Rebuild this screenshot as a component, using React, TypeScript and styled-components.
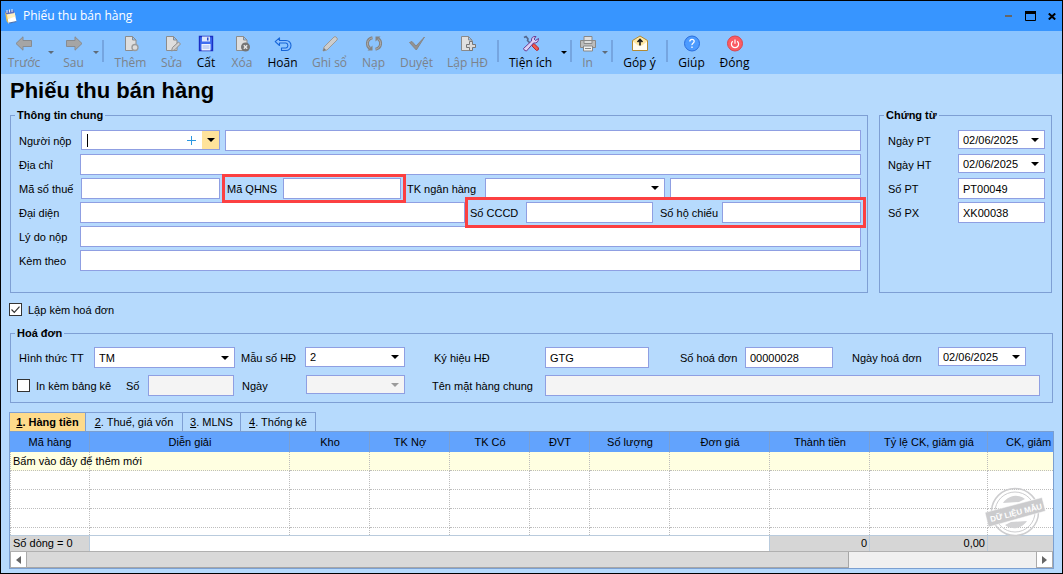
import React from "react";
import styled, { createGlobalStyle, css } from "styled-components";

const color = {
  title: "#3795ff",
  toolbar: "#8bc4ff",
  body: "#b6dafd",
  group: "#7e9fd4",
  field: "#8f9fe2",
  header: "#62a3fd",
  dotted: "#bdbdbd",
  mark: "#fc4041",
};

const GlobalStyle = createGlobalStyle`
  *, *::before, *::after { box-sizing: border-box; }
  body { margin: 0; background: ${color.body}; }
  body, button, input, select, table {
    font-family: "Liberation Sans", Arial, sans-serif;
    font-size: 11px;
    line-height: 14px;
    color: #000;
  }
  button { cursor: pointer; }
`;

const Window = styled.div`
  display: flex;
  flex-direction: column;
  min-height: 100vh;
  border: 1px solid #000;
  background: ${color.body};
`;

const TitleBar = styled.header`
  display: flex;
  align-items: center;
  gap: 6px;
  height: 30px;
  padding: 0 0 0 3px;
  background: ${color.title};
`;

const WindowTitle = styled.span`
  flex: 1;
  font-family: "Open Sans", "Noto Sans", sans-serif;
  font-size: 12px;
  line-height: 16px;
  color: #fff;
`;

const WindowButtons = styled.div`
  display: flex;
  gap: 2px;
`;

const WindowButton = styled.button`
  display: grid;
  place-items: center;
  width: 20px;
  height: 20px;
  padding: 0;
  border: 0;
  background: none;
`;

const Toolbar = styled.div`
  display: flex;
  height: 43px;
  background: ${color.toolbar};
`;

const ToolButton = styled.button<{ $w: number }>`
  display: flex;
  flex: none;
  flex-direction: column;
  align-items: center;
  gap: 3px;
  width: ${(p) => p.$w}px;
  padding: 4px 0 0;
  border: 0;
  background: none;
  font-family: "Open Sans", "Noto Sans", sans-serif;
  font-size: 12px;
  line-height: 16px;
  white-space: nowrap;
  color: #000;
  &:disabled { color: #7c828a; }
`;

const ToolArrow = styled.button`
  display: flex;
  flex: none;
  align-items: center;
  justify-content: center;
  width: 8px;
  padding: 0;
  border: 0;
  background: none;
  color: #000;
  &:disabled { color: #5f6b78; }
`;

const ToolDivider = styled.span`
  flex: none;
  width: 2px;
  height: 22px;
  margin: 9px 2px 0;
  background: #75a5e0;
`;

const Content = styled.main`
  padding: 0 8px 4px;
`;

const Heading = styled.h1`
  margin: 0;
  padding-left: 1px;
  font-size: 22px;
  line-height: 34px;
  font-weight: bold;
`;

const TopRow = styled.div`
  display: grid;
  grid-template-columns: 1fr 173px;
  gap: 11px;
  padding: 0 2px 0 1px;
`;

const Group = styled.fieldset<{ $gap: number }>`
  min-width: 0;
  margin: 0;
  padding: 7px 6px 6px 8px;
  border: 1px solid ${color.group};
  display: flex;
  flex-direction: column;
  gap: ${(p) => p.$gap}px;
`;

const InfoGroup = styled(Group)`
  padding-top: 8px;
  padding-bottom: 21px;
`;

const Legend = styled.legend`
  margin-left: -4px;
  padding: 0 2px;
  font-weight: bold;
  line-height: 14px;
`;

const Row = styled.div`
  display: flex;
  height: 21px;
`;

const Label = styled.label<{ $w: number; $lead?: number }>`
  flex: none;
  width: ${(p) => p.$w}px;
  padding-left: ${(p) => p.$lead ?? 0}px;
  line-height: 22px;
  white-space: nowrap;
`;

const fieldBox = css`
  border: 1px solid ${color.field};
  border-radius: 0;
  background: #fff;
`;

const sized = css<{ $w?: number }>`
  ${(p) => (p.$w ? `flex: none; width: ${p.$w}px;` : "flex: 1; min-width: 0;")}
`;

const Field = styled.input<{ $w?: number }>`
  ${fieldBox}
  ${sized}
  height: 21px;
  padding: 1px 4px 0;
  outline: none;
  &:disabled { background: #f4f4f4; }
`;

const Gap = styled.span<{ $w: number }>`
  flex: none;
  width: ${(p) => p.$w}px;
`;

const SelectBox = styled.div<{ $w?: number; $h?: number; $off?: boolean }>`
  ${fieldBox}
  ${sized}
  position: relative;
  height: ${(p) => p.$h ?? 20}px;
  color: ${(p) => (p.$off ? "#9b9b9b" : "#000")};
  background: ${(p) => (p.$off ? "#f4f4f4" : "#fff")};
  svg {
    position: absolute;
    right: 5px;
    top: calc(50% - 2px);
    pointer-events: none;
  }
`;

const NativeSelect = styled.select`
  appearance: none;
  display: block;
  width: 100%;
  height: 100%;
  padding: 0 18px 0 4px;
  border: 0;
  border-radius: 0;
  outline: none;
  background: none;
`;

const Combo = styled.div`
  ${fieldBox}
  display: flex;
  flex: none;
  width: 139px;
  height: 20px;
`;

const ComboInput = styled.input`
  flex: 1;
  min-width: 0;
  padding: 0 2px;
  border: 0;
  outline: none;
  background: none;
`;

const Caret = styled.span`
  width: 1px;
  height: 13px;
  margin: 3px 0 0 5px;
  background: #000;
`;

const ComboButton = styled.button<{ $accent?: boolean }>`
  display: grid;
  place-items: center;
  width: ${(p) => (p.$accent ? 17 : 22)}px;
  padding: 0;
  border: 0;
  background: ${(p) => (p.$accent ? "#ffe39b" : "none")};
`;

const Marked = styled.div<{ $area: string }>`
  position: relative;
  display: flex;
  flex: none;
  &::after {
    content: "";
    position: absolute;
    z-index: 1;
    inset: ${(p) => p.$area};
    border: 3px solid ${color.mark};
    pointer-events: none;
  }
`;

const CheckRow = styled.div`
  display: flex;
  align-items: center;
  height: 33px;
`;

const CheckBox = styled.input`
  appearance: none;
  flex: none;
  width: 13px;
  height: 13px;
  margin: 0 6px 0 0;
  border: 1px solid #333;
  background: #fff;
  &:checked {
    background: #fff
      url("data:image/svg+xml,%3Csvg xmlns='http://www.w3.org/2000/svg' viewBox='0 0 11 11'%3E%3Cpath d='M1.5 5.5l2.8 2.8L9.5 2.6' fill='none' stroke='%23333' stroke-width='1.2'/%3E%3C/svg%3E");
  }
`;

const CheckLabel = styled.label<{ $w?: number }>`
  display: flex;
  align-items: center;
  flex: none;
  width: ${(p) => (p.$w ? `${p.$w}px` : "auto")};
  white-space: nowrap;
`;

const InsetCheckLabel = styled(CheckLabel)`
  margin-left: -2px;
`;

const InvoiceArea = styled.div`
  padding: 0 1px;
`;

const Tabs = styled.div`
  display: flex;
  margin-top: 9px;
`;

const Tab = styled.button<{ $w: number; $active?: boolean }>`
  width: ${(p) => p.$w}px;
  height: 19px;
  padding: 0;
  border: 1px solid ${color.group};
  border-bottom: 0;
  border-left-width: ${(p) => (p.$active ? 1 : 0)}px;
  background: ${(p) => (p.$active ? "#fedb8b" : "none")};
  font-weight: ${(p) => (p.$active ? "bold" : "normal")};
  white-space: nowrap;
`;

const GridFrame = styled.div`
  position: relative;
  border: 1px solid #7b9fd0;
  background: #fff;
`;

const Table = styled.table`
  width: 100%;
  table-layout: fixed;
  border-collapse: separate;
  border-spacing: 0;
  th {
    height: 20px;
    padding: 0 0 0 1px;
    border-right: 1px solid #7ba0d2;
    background: ${color.header};
    font-weight: normal;
    white-space: nowrap;
    overflow: hidden;
  }
  th:last-child { padding-left: 18px; text-align: left; }
  th:last-child, td:last-child { border-right: 0; }
`;

const Col = styled.col<{ $w?: number }>`
  width: ${(p) => (p.$w ? `${p.$w}px` : "auto")};
`;

const BodyRow = styled.tr<{ $entry?: boolean; $cut?: boolean }>`
  td {
    height: ${(p) => (p.$cut ? 7 : 19)}px;
    padding: 0 0 0 2px;
    border-right: 1px dotted ${color.dotted};
    border-bottom: ${(p) => (p.$cut ? "0" : `1px dotted ${color.dotted}`)};
    background: ${(p) => (p.$entry ? "#ffffe1" : "#fff")};
    white-space: nowrap;
  }
  td:first-child { border-left: 1px dotted ${color.dotted}; }
  td > span { position: relative; }
`;

const TotalRow = styled.tr`
  td {
    height: 16px;
    padding: 0 2px;
    border-top: 1px solid #b9cbdd;
    border-right: 1px solid #b9cbdd;
    background: #d6d6d6;
    text-align: right;
    vertical-align: top;
    line-height: 15px;
    white-space: nowrap;
  }
  td:first-child { padding-left: 3px; text-align: left; }
  td:nth-child(2) { background: #fff; }
`;

const ScrollBar = styled.div`
  display: flex;
  height: 17px;
  border-top: 1px solid #b0b0b0;
  background: #f0f0f0;
`;

const ScrollButton = styled.button`
  display: grid;
  place-items: center;
  flex: none;
  width: 17px;
  padding: 0;
  border: 1px solid #ababab;
  border-top: 0;
  background: #fff;
`;

const Track = styled.div`
  display: flex;
  flex: 1;
  &::after {
    content: "";
    flex: 5;
  }
`;

const Thumb = styled.span`
  flex: 22;
  border-right: 1px solid #a6a6a6;
  border-bottom: 1px solid #a6a6a6;
  background: #d9d9d9;
`;

const Stamp = styled.svg`
  position: absolute;
  right: 5px;
  bottom: 31px;
  pointer-events: none;
`;

const Arrow = ({ w = 8 }: { w?: number }) => (
  <svg width={w} height={w / 2} viewBox="0 0 8 4" aria-hidden="true">
    <path d="M0 0h8L4 4z" fill="currentColor" />
  </svg>
);

const Icon = ({ children }: { children: React.ReactNode }) => (
  <svg width="18" height="17" viewBox="0 0 18 17" fill="none" aria-hidden="true">
    {children}
  </svg>
);

const pageShape = (
  <path d="M3.5 1.5h7l3.5 3.5v10.5H3.5zM10.500 1.500v3.500H14" fill="#dedede" stroke="#8c8c8c" />
);

const icons = {
  back: (
    <Icon>
      <path d="M1 8.500L8 1.800v3.700h8.500v6H8v3.700z" fill="#a5a5a5" stroke="#878b90" strokeLinejoin="round" />
    </Icon>
  ),
  next: (
    <Icon>
      <path d="M17 8.500L10 1.800v3.700H1.500v6H10v3.700z" fill="#a5a5a5" stroke="#878b90" strokeLinejoin="round" />
    </Icon>
  ),
  add: (
    <Icon>
      {pageShape}
      <circle cx="13" cy="12.500" r="3" fill="#dcdcdc" stroke="#9c9c9c" strokeWidth="1.400" />
    </Icon>
  ),
  edit: (
    <Icon>
      {pageShape}
      <path d="M8.500 16l1-3.500 6-5.500 2 2-6 6z" fill="#cfcfcf" stroke="#8f8f8f" />
    </Icon>
  ),
  save: (
    <Icon>
      <path d="M2.500 1.500h13v14h-13z" fill="#3f6cf0" stroke="#1a2fc4" strokeWidth="1.400" />
      <path d="M5 1.500h8v5H5z" fill="#dce6fb" />
      <path d="M10 2.500h1.500v3H10z" fill="#2b49cf" />
      <path d="M4.500 9h9v6.500h-9z" fill="#eef3ff" />
      <path d="M5.500 11h7M5.500 13h7" stroke="#9bb2ee" />
    </Icon>
  ),
  remove: (
    <Icon>
      {pageShape}
      <circle cx="12.500" cy="12" r="4.500" fill="#757575" />
      <path d="M10.800 10.300l3.400 3.400M14.200 10.300l-3.400 3.400" stroke="#e8e8e8" strokeWidth="1.400" />
    </Icon>
  ),
  undo: (
    <Icon>
      <path d="M5.500 2.800L1.200 6.700l4.300 3.800V8H12a2.600 2.600 0 010 5H7.500v2.500H12a5 5 0 000-10H5.500z" fill="#8cc0ff" stroke="#1766d8" strokeWidth="1.100" strokeLinejoin="round" />
    </Icon>
  ),
  post: (
    <Icon>
      <path d="M2 16l1-4L13 2q1-.8 2 0l1 1q.8 1 0 2L6 15z" fill="#cdcdcd" stroke="#9a9a9a" />
      <path d="M2 16l1-3 2 2z" fill="#777" />
    </Icon>
  ),
  reload: (
    <Icon>
      <path d="M7.500 2.800C1.500 4 1 10.500 5 13.500M10.500 14.200C16.500 13 17 6.500 13 3.500" stroke="#848484" strokeWidth="3" />
      <path d="M7.500 2.800C1.500 4 1 10.500 5 13.500M10.500 14.200C16.500 13 17 6.500 13 3.500" stroke="#adadad" />
      <path d="M2.500 15.500h5v-5zM15.500 1.500h-5v5z" fill="#848484" />
    </Icon>
  ),
  approve: (
    <Icon>
      <path d="M1.500 7.500l2.500-1 4 4.500 8.500-9L8.300 15z" fill="#929292" stroke="#878787" strokeLinejoin="round" />
    </Icon>
  ),
  invoice: (
    <Icon>
      <path d="M2.500 1.500h7l3.500 3.500v10.500H2.500zM9.500 1.500v3.500H13" fill="#e0e0e0" stroke="#8a8a8a" />
      <path d="M10.500 6.500h3v3h3v3h-3v3h-3v-3h-3v-3h3z" fill="#dadada" stroke="#777" />
    </Icon>
  ),
  tools: (
    <Icon>
      <path d="M2 2.500l2-1 2 2.500-.5 1.500 3.500 3.500" stroke="#54688f" strokeWidth="1.600" />
      <path d="M10.500 9.500l1.500-1 4.500 4.500q.5 2.500-2 2.500L10 11z" fill="#ef5a4d" stroke="#b52632" />
      <path d="M14 1.500q-5-.5-4.500 4.500L1.500 13.500q.5 2.500 3 2.500L11.500 8q5 .5 5-4.500l-3 2-1.500-1.500z" fill="#ddd0f5" stroke="#6a3d93" strokeLinejoin="round" />
    </Icon>
  ),
  print: (
    <Icon>
      <path d="M5 1.500h8v4H5z" fill="#dedede" stroke="#888" />
      <path d="M1.500 5.500h15v7h-15z" fill="#bcbcbc" stroke="#888" />
      <path d="M5 5.500h8v3H5z" fill="#ddd" stroke="#888" />
      <path d="M4.500 11h9v5h-9z" fill="#f0f0f0" stroke="#888" />
      <path d="M6 13.500h6" stroke="#888" />
    </Icon>
  ),
  feedback: (
    <Icon>
      <path d="M1.500 5.500L9 1l7.500 4.500v10h-15z" fill="#ffe9a5" stroke="#b38a32" />
      <path d="M2 6.500l5 4h4l5-4v8.500H2z" fill="#fffdf3" />
      <path d="M9 10.500V4.500M6.500 7L9 4.500 11.500 7" stroke="#1a1a1a" strokeWidth="1.600" />
    </Icon>
  ),
  help: (
    <Icon>
      <circle cx="9" cy="8.500" r="7.500" fill="#4c9bff" stroke="#2c6fdc" />
      <path d="M6.800 6.500Q6.900 4.300 9 4.300t2.200 2Q11.200 7.400 10 8.200T9 10.200M9 11.500V13" stroke="#fff" strokeWidth="1.300" />
    </Icon>
  ),
  close: (
    <Icon>
      <circle cx="9" cy="8.500" r="7.500" fill="#fb5b62" stroke="#d9474e" />
      <path d="M6.800 6.200a3.600 3.600 0 104.400 0M9 4.500v4.200" stroke="#fff" strokeWidth="1.200" />
    </Icon>
  ),
};

const AppIcon = () => (
  <svg width="13" height="15" viewBox="0 0 13 15" fill="none" aria-hidden="true">
    <path d="M2.500 5l8-1.500 2 9-8 2z" fill="#fff" />
    <path d="M2 5l8.500-1.500 1 4-8.500 3z" fill="#fff0c0" />
    <path d="M1 2.500L9.500 1l1 3L2 5.500z" fill="#5b6fc0" />
    <path d="M1 3l1.500 9 2 2.500L3 6z" fill="#ecc04d" />
    <path d="M5 13.500l7.500-1.500v1L5 14.800z" fill="#4c72ad" />
    <path d="M3 1v3M5.500 .5v3M8 0v3" stroke="#e9edfa" />
  </svg>
);

type SelectProps = { id: string; value?: string; w?: number; h?: number; off?: boolean };

const Select = ({ id, value = "", w, h, off }: SelectProps) => (
  <SelectBox $w={w} $h={h} $off={off}>
    <NativeSelect id={id} disabled={off} defaultValue={value}>
      <option value={value}>{value}</option>
    </NativeSelect>
    <Arrow />
  </SelectBox>
);

type Tool = { name: string; icon: keyof typeof icons; w: number; off?: boolean };

const ToolItem = ({ name, icon, w, off }: Tool) => (
  <ToolButton type="button" $w={w} disabled={off}>
    {icons[icon]}
    {name}
  </ToolButton>
);

const editTools: Tool[] = [
  { name: "Thêm", icon: "add", w: 49, off: true },
  { name: "Sửa", icon: "edit", w: 33, off: true },
  { name: "Cất", icon: "save", w: 36 },
  { name: "Xóa", icon: "remove", w: 36, off: true },
  { name: "Hoãn", icon: "undo", w: 45 },
  { name: "Ghi sổ", icon: "post", w: 49, off: true },
  { name: "Nạp", icon: "reload", w: 39, off: true },
  { name: "Duyệt", icon: "approve", w: 47, off: true },
  { name: "Lập HĐ", icon: "invoice", w: 55, off: true },
];

const columns: { name: string; w?: number }[] = [
  { name: "Mã hàng", w: 80 },
  { name: "Diễn giải", w: 200 },
  { name: "Kho", w: 80 },
  { name: "TK Nợ", w: 80 },
  { name: "TK Có", w: 80 },
  { name: "ĐVT", w: 60 },
  { name: "Số lượng", w: 80 },
  { name: "Đơn giá", w: 100 },
  { name: "Thành tiền", w: 100 },
  { name: "Tỷ lệ CK, giảm giá", w: 118 },
  { name: "CK, giảm" },
];

const cells = (first?: string) =>
  columns.map((c, i) => <td key={c.name}>{i === 0 && first ? <span>{first}</span> : null}</td>);

export default function App() {
  return (
    <>
      <GlobalStyle />
      <Window>
        <TitleBar>
          <AppIcon />
          <WindowTitle>Phiếu thu bán hàng</WindowTitle>
          <WindowButtons>
            <WindowButton type="button" aria-label="Thu nhỏ">
              <svg width="7" height="2"><path d="M0 0h7v2H0z" fill="#666" /></svg>
            </WindowButton>
            <WindowButton type="button" aria-label="Phóng to">
              <svg width="11" height="10" fill="none"><path d="M.5.5h10v9H.5z" stroke="#000" /><path d="M0 0h11v3H0z" fill="#000" /></svg>
            </WindowButton>
            <WindowButton type="button" aria-label="Đóng cửa sổ">
              <svg width="8" height="7" fill="none"><path d="M.8.5l6.400 6M7.200.5l-6.400 6" stroke="#000" strokeWidth="2" /></svg>
            </WindowButton>
          </WindowButtons>
        </TitleBar>

        <Toolbar>
          <ToolItem name="Trước" icon="back" w={46} off />
          <ToolArrow type="button" disabled aria-label="Các phiếu trước"><Arrow w={6} /></ToolArrow>
          <ToolItem name="Sau" icon="next" w={37} off />
          <ToolArrow type="button" disabled aria-label="Các phiếu sau"><Arrow w={6} /></ToolArrow>
          <ToolDivider />
          {editTools.map((t) => <ToolItem key={t.name} {...t} />)}
          <ToolDivider />
          <ToolItem name="Tiện ích" icon="tools" w={59} />
          <ToolArrow type="button" aria-label="Thêm tiện ích"><Arrow w={6} /></ToolArrow>
          <ToolDivider />
          <ToolItem name="In" icon="print" w={27} off />
          <ToolArrow type="button" disabled aria-label="Chọn mẫu in"><Arrow w={6} /></ToolArrow>
          <ToolDivider />
          <ToolItem name="Góp ý" icon="feedback" w={49} />
          <ToolDivider />
          <ToolItem name="Giúp" icon="help" w={43} />
          <ToolItem name="Đóng" icon="close" w={43} />
        </Toolbar>

        <Content>
          <Heading>Phiếu thu bán hàng</Heading>

          <TopRow>
            <InfoGroup $gap={3}>
              <Legend>Thông tin chung</Legend>
              <Row>
                <Label htmlFor="payer" $w={62}>Người nộp</Label>
                <Combo>
                  <Caret />
                  <ComboInput id="payer" />
                  <ComboButton type="button" aria-label="Thêm người nộp">
                    <svg width="9" height="9"><path d="M4 0h1v4h4v1H5v4H4V5H0V4h4z" fill="#2a97e0" /></svg>
                  </ComboButton>
                  <ComboButton type="button" $accent aria-label="Chọn người nộp"><Arrow /></ComboButton>
                </Combo>
                <Gap $w={5} />
                <Field aria-label="Tên người nộp" />
              </Row>
              <Row>
                <Label htmlFor="address" $w={61}>Địa chỉ</Label>
                <Field id="address" />
              </Row>
              <Row>
                <Label htmlFor="tax" $w={62}>Mã số thuế</Label>
                <Field id="tax" $w={139} />
                <Gap $w={3} />
                <Marked $area="-4px -5px -4px -1px">
                  <Label htmlFor="budget" $w={60} $lead={4}>Mã QHNS</Label>
                  <Field id="budget" $w={118} />
                </Marked>
                <Label htmlFor="bank" $w={84} $lead={6}>TK ngân hàng</Label>
                <Select id="bank" w={180} />
                <Gap $w={5} />
                <Field aria-label="Tên ngân hàng" />
              </Row>
              <Row>
                <Label htmlFor="agent" $w={61}>Đại diện</Label>
                <Field id="agent" />
                <Marked $area="-5px -5px -5px 0">
                  <Label htmlFor="citizen" $w={61} $lead={5}>Số CCCD</Label>
                  <Field id="citizen" $w={127} />
                  <Label htmlFor="passport" $w={69} $lead={7}>Số hộ chiếu</Label>
                  <Field id="passport" $w={139} />
                </Marked>
              </Row>
              <Row>
                <Label htmlFor="reason" $w={61}>Lý do nộp</Label>
                <Field id="reason" />
              </Row>
              <Row>
                <Label htmlFor="attached" $w={61}>Kèm theo</Label>
                <Field id="attached" />
              </Row>
            </InfoGroup>

            <InfoGroup $gap={3}>
              <Legend>Chứng từ</Legend>
              <Row>
                <Label htmlFor="receiptDate" $w={70}>Ngày PT</Label>
                <Select id="receiptDate" value="02/06/2025" h={19} />
              </Row>
              <Row>
                <Label htmlFor="postDate" $w={70}>Ngày HT</Label>
                <Select id="postDate" value="02/06/2025" h={19} />
              </Row>
              <Row>
                <Label htmlFor="receiptNo" $w={70}>Số PT</Label>
                <Field id="receiptNo" defaultValue="PT00049" />
              </Row>
              <Row>
                <Label htmlFor="issueNo" $w={70}>Số PX</Label>
                <Field id="issueNo" defaultValue="XK00038" />
              </Row>
            </InfoGroup>
          </TopRow>

          <CheckRow>
            <CheckLabel><CheckBox type="checkbox" defaultChecked />Lập kèm hoá đơn</CheckLabel>
          </CheckRow>

          <InvoiceArea>
            <Group $gap={7}>
              <Legend>Hoá đơn</Legend>
              <Row>
                <Label htmlFor="payment" $w={75}>Hình thức TT</Label>
                <Select id="payment" value="TM" w={141} h={21} />
                <Label htmlFor="form" $w={70} $lead={6}>Mẫu số HĐ</Label>
                <Select id="form" value="2" w={100} />
                <Label htmlFor="serial" $w={140} $lead={29}>Ký hiệu HĐ</Label>
                <Field id="serial" defaultValue="GTG" $w={104} />
                <Label htmlFor="invoiceNo" $w={96} $lead={31}>Số hoá đơn</Label>
                <Field id="invoiceNo" defaultValue="00000028" $w={88} />
                <Label htmlFor="invoiceDate" $w={105} $lead={19}>Ngày hoá đơn</Label>
                <Select id="invoiceDate" value="02/06/2025" w={88} h={19} />
              </Row>
              <Row>
                <InsetCheckLabel $w={109}><CheckBox type="checkbox" />In kèm bảng kê</InsetCheckLabel>
                <Label htmlFor="listNo" $w={22}>Số</Label>
                <Field id="listNo" disabled $w={86} />
                <Label htmlFor="listDate" $w={72} $lead={8}>Ngày</Label>
                <Select id="listDate" off w={99} h={19} />
                <Label htmlFor="common" $w={140} $lead={27}>Tên mặt hàng chung</Label>
                <Field id="common" disabled />
                <Gap $w={6} />
              </Row>
            </Group>
          </InvoiceArea>

          <Tabs role="tablist">
            <Tab type="button" role="tab" aria-selected="true" $active $w={77}><u>1</u>. Hàng tiền</Tab>
            <Tab type="button" role="tab" $w={97}><u>2</u>. Thuế, giá vốn</Tab>
            <Tab type="button" role="tab" $w={58}><u>3</u>. MLNS</Tab>
            <Tab type="button" role="tab" $w={75}><u>4</u>. Thống kê</Tab>
          </Tabs>

          <GridFrame>
            <Table>
              <colgroup>{columns.map((c) => <Col key={c.name} $w={c.w} />)}</colgroup>
              <thead>
                <tr>{columns.map((c) => <th key={c.name}>{c.name}</th>)}</tr>
              </thead>
              <tbody>
                <BodyRow $entry>{cells("Bấm vào đây để thêm mới")}</BodyRow>
                <BodyRow>{cells()}</BodyRow>
                <BodyRow>{cells()}</BodyRow>
                <BodyRow>{cells()}</BodyRow>
                <BodyRow $cut>{cells()}</BodyRow>
              </tbody>
              <tfoot>
                <TotalRow>
                  <td>Số dòng = 0</td>
                  <td colSpan={7} />
                  <td>0</td>
                  <td>0,00</td>
                  <td />
                </TotalRow>
              </tfoot>
            </Table>
            <ScrollBar>
              <ScrollButton type="button" aria-label="Cuộn trái">
                <svg width="5" height="8"><path d="M5 0v8L0 4z" fill="#666" /></svg>
              </ScrollButton>
              <Track><Thumb /></Track>
              <ScrollButton type="button" aria-label="Cuộn phải">
                <svg width="5" height="8"><path d="M0 0v8l5-4z" fill="#666" /></svg>
              </ScrollButton>
            </ScrollBar>
            <Stamp width="64" height="50" viewBox="0 0 64 50" fill="none">
              <circle cx="31" cy="25" r="23.500" stroke="#cdcdcf" strokeWidth="1.500" />
              <circle cx="31" cy="25" r="20" stroke="#cdcdcf" />
              <path d="M19 16a15 15 0 0122-4l-6 3zM43 34a15 15 0 01-22 4l6-3z" fill="#d2d2d4" />
              <path d="M1 25.500L58 10.500l3.500 13.500L4.500 40z" fill="#cbcbcd" stroke="#fff" strokeWidth=".5" />
              <text
                x="32"
                y="28.500"
                transform="rotate(-14.500 32 25)"
                textAnchor="middle"
                fill="#fff"
                fontFamily="Liberation Sans, Arial, sans-serif"
                fontSize="8"
                fontWeight="bold"
              >
                DỮ LIỆU MẪU
              </text>
            </Stamp>
          </GridFrame>
        </Content>
      </Window>
    </>
  );
}
